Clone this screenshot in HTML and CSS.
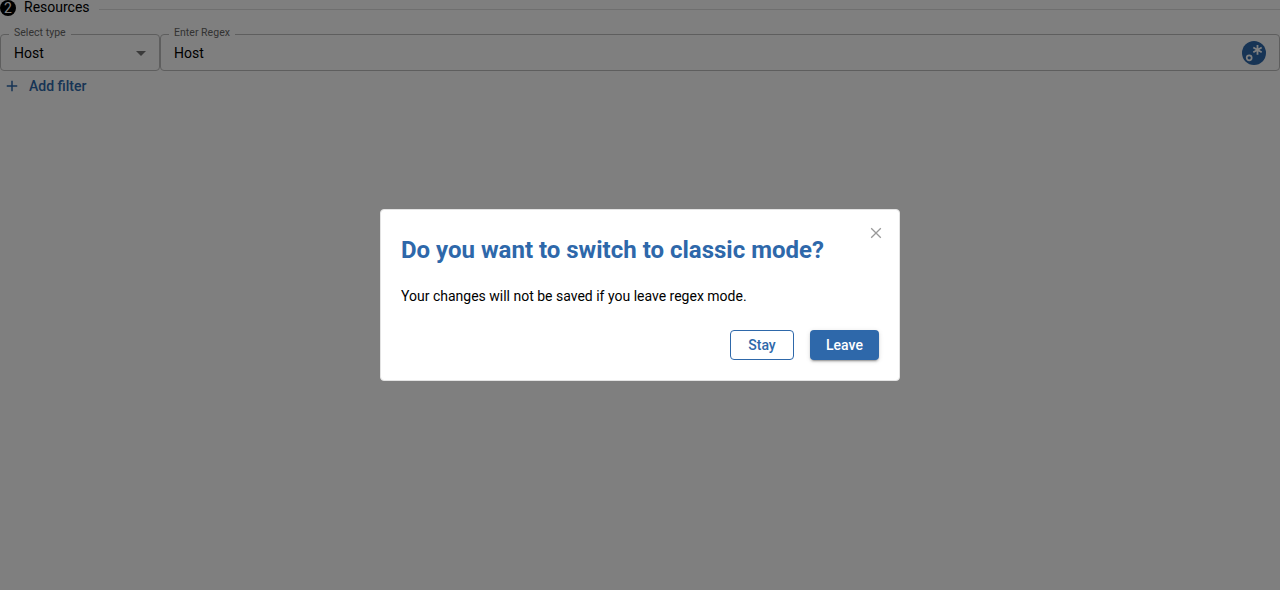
FILE: index.html
```
<!DOCTYPE html>
<html lang="en">
<head>
<meta charset="utf-8">
<title>Resources</title>
<link rel="stylesheet" href="styles.css">
</head>
<body>
<main class="page">
  <header class="section-header">
    <span class="step">2</span>
    <span class="section-title">Resources</span>
    <span class="divider"></span>
  </header>
  <div class="fields">
    <fieldset class="field select-field">
      <legend>Select type</legend>
      <span>Host</span>
      <svg class="arrow" width="24" height="24" viewBox="0 0 24 24"><path d="M7 10l5 5 5-5z" fill="#757575"/></svg>
    </fieldset>
    <fieldset class="field regex-field">
      <legend>Enter Regex</legend>
      <span>Host</span>
      <svg class="regex-icon" width="24" height="24" viewBox="0 0 24 24">
        <circle cx="12" cy="12" r="12" fill="#2e68aa"/>
        <circle cx="7.2" cy="16.8" r="2.5" fill="none" stroke="#fff" stroke-width="1.7"/>
        <path d="M15.5 4v9.8M11.3 6.5l8.4 4.8M19.7 6.5l-8.4 4.8" fill="none" stroke="#fff" stroke-width="1.8"/>
      </svg>
    </fieldset>
  </div>
  <button class="add-filter">
    <svg width="18" height="18" viewBox="0 0 24 24"><path d="M19 13h-6v6h-2v-6H5v-2h6V5h2v6h6v2z" fill="currentColor"/></svg>
    <span>Add filter</span>
  </button>
</main>
<div class="backdrop">
  <section class="dialog" role="dialog">
    <button class="close" aria-label="Close">
      <svg width="12" height="12" viewBox="0 0 12 12"><path d="M1.2 1.2l9.6 9.6M10.8 1.2l-9.6 9.6" fill="none" stroke="#999" stroke-width="1.3"/></svg>
    </button>
    <h2>Do you want to switch to classic mode?</h2>
    <p>Your changes will not be saved if you leave regex mode.</p>
    <div class="actions">
      <button class="btn outlined">Stay</button>
      <button class="btn contained">Leave</button>
    </div>
  </section>
</div>
</body>
</html>
```
FILE: styles.css
```
* { box-sizing: border-box; }
body {
  margin: 0;
  height: 590px;
  overflow: hidden;
  background: #fff;
  color: #000;
  font-family: Roboto, "Liberation Sans", sans-serif;
  font-size: 14px;
}
button { font-family: inherit; border: 0; background: none; padding: 0; }
.section-header { display: flex; align-items: center; height: 16px; }
.step {
  width: 16px;
  height: 16px;
  border-radius: 50%;
  background: #000;
  color: #fff;
  text-align: center;
  line-height: 16px;
}
.section-title { margin: -2px 9px 0 8px; line-height: 16px; font-size: 14px; }
.divider { flex: 1; height: 1px; margin-top: 3px; background: #dedede; }
.fields { display: flex; padding-top: 12px; }
.field {
  display: flex;
  align-items: center;
  min-width: 0;
  margin: 0;
  height: 43px;
  padding: 0 13px 4px;
  border: 1px solid #bcbcbc;
  border-radius: 4px;
  line-height: 20px;
}
.field legend {
  margin-left: -5px;
  padding: 0 5px;
  height: 12px;
  font-size: 10.5px;
  line-height: 10px;
  color: #666;
  letter-spacing: 0.03px;
}
.select-field { width: 160px; }
.regex-field { flex: 1; }
.arrow { margin-left: auto; margin-right: -7px; }
.regex-icon { margin-left: auto; }
.add-filter {
  display: flex;
  align-items: center;
  gap: 8px;
  height: 30px;
  padding-left: 3px;
  color: #2e68aa;
  font-size: 14px;
  font-weight: 500;
}
.backdrop {
  position: fixed;
  inset: 0;
  display: grid;
  place-items: center;
  background: rgba(0, 0, 0, 0.5);
}
.dialog {
  position: relative;
  width: 520px;
  height: 172px;
  padding: 24px 20px 20px;
  border: 1px solid #e3e3e3;
  border-radius: 4px;
  background: #fff;
}
.close { position: absolute; top: 17px; right: 17px; width: 12px; height: 12px; }
.close svg { display: block; }
.dialog h2 { margin: 0; color: #2e68aa; font-size: 24px; line-height: 32px; font-weight: 700; }
.dialog p { margin: 20px 0 24px; line-height: 20px; }
.actions { display: flex; justify-content: flex-end; gap: 16px; }
.btn { height: 30px; border-radius: 4px; font-size: 14px; font-weight: 500; line-height: 20px; }
.outlined { width: 64px; border: 1px solid #2e68aa; color: #2e68aa; }
.contained {
  width: 69px;
  background: #2e68aa;
  color: #fff;
  box-shadow: 0 3px 1px -2px rgba(0, 0, 0, 0.2), 0 2px 2px rgba(0, 0, 0, 0.14), 0 1px 5px rgba(0, 0, 0, 0.12);
}
```
